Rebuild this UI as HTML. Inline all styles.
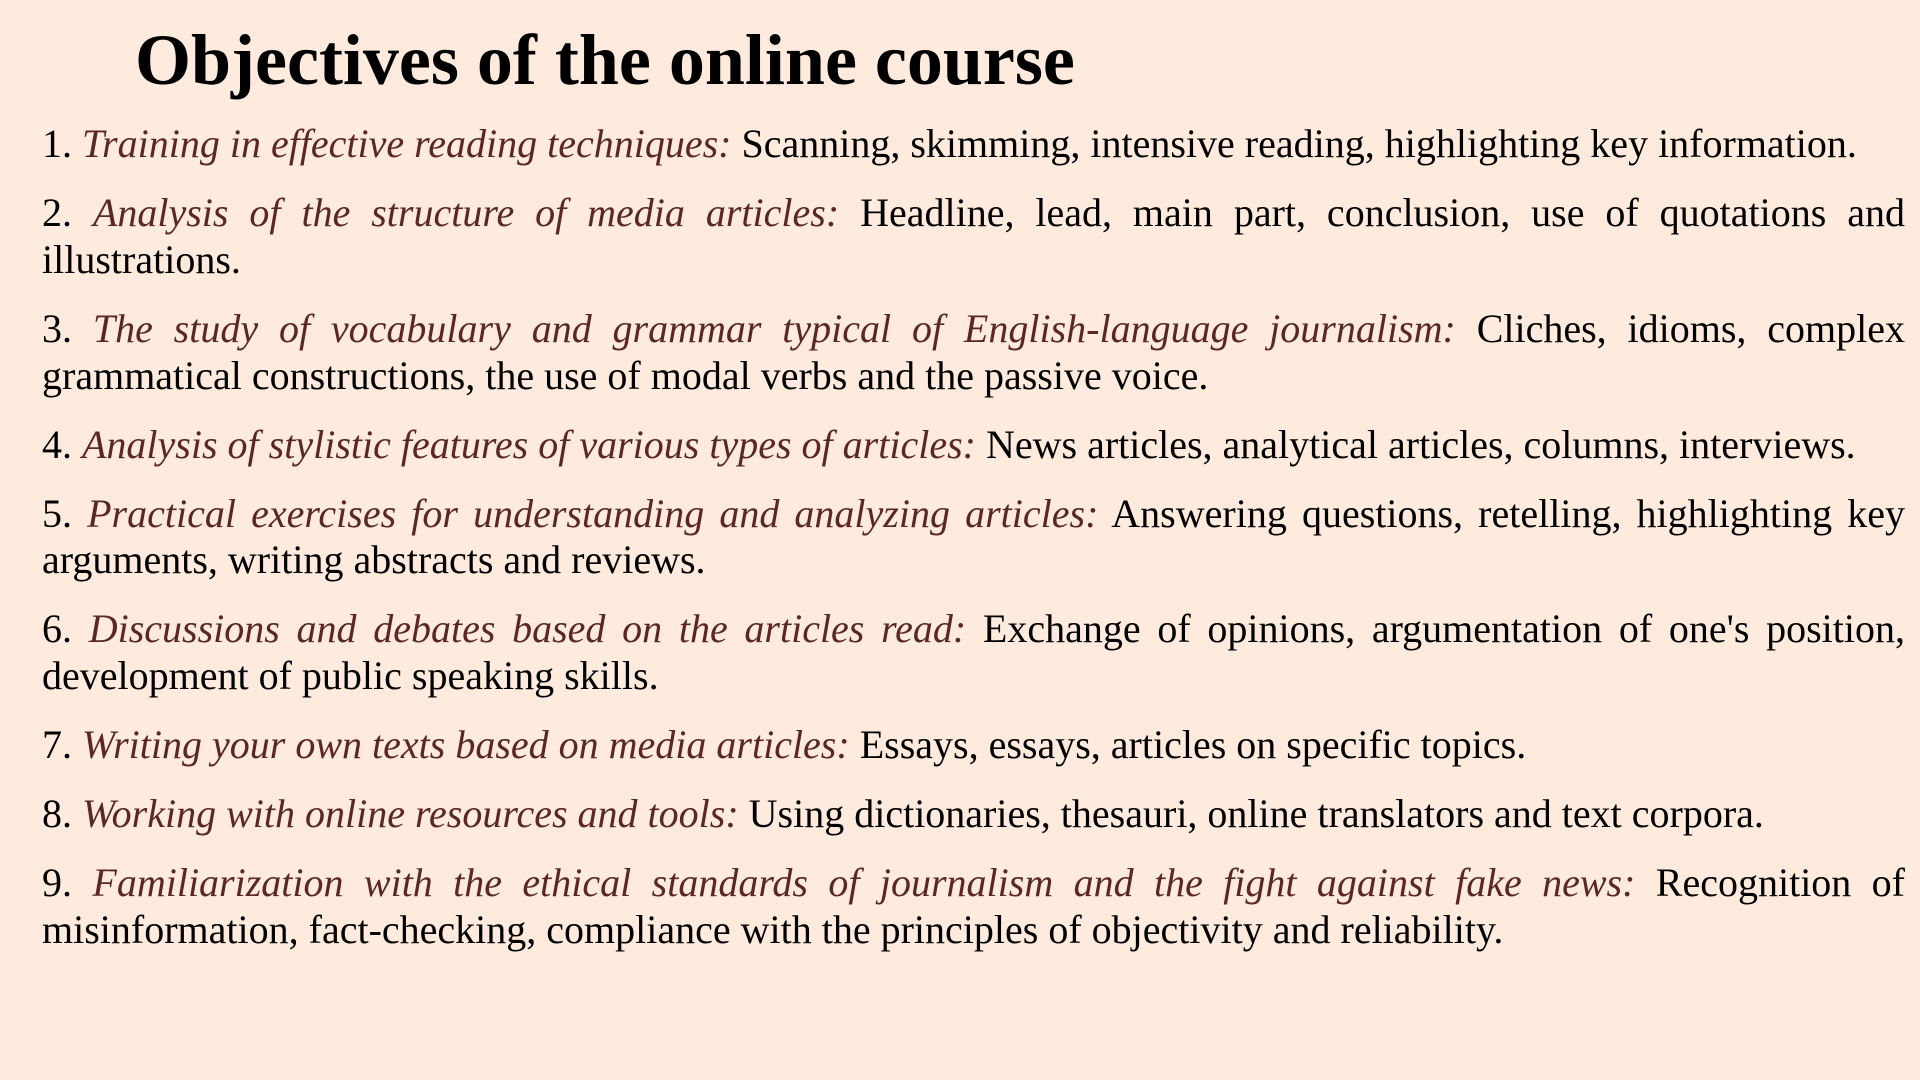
<!DOCTYPE html>
<html><head><meta charset="utf-8"><style>
html,body{margin:0;padding:0}
body{width:1920px;height:1080px;background:#feebdd;font-family:"Liberation Serif",serif;color:#000;overflow:hidden;position:relative}
h1{position:absolute;left:135px;top:19px;margin:0;font-size:72px;font-weight:bold;line-height:82px}
.list{position:absolute;left:42px;width:1863px;top:121px}
p{margin:0 0 22.2px 0;font-size:40px;line-height:46.8px;text-align:justify}
i{color:#5a2626}
</style></head><body>
<h1>Objectives of the online course</h1>
<div class="list">
<p>1. <i>Training in effective reading techniques:</i> Scanning, skimming, intensive reading, highlighting key information.</p>
<p>2. <i>Analysis of the structure of media articles:</i> Headline, lead, main part, conclusion, use of quotations and illustrations.</p>
<p>3. <i>The study of vocabulary and grammar typical of English-language journalism:</i> Cliches, idioms, complex grammatical constructions, the use of modal verbs and the passive voice.</p>
<p>4. <i>Analysis of stylistic features of various types of articles:</i> News articles, analytical articles, columns, interviews.</p>
<p>5. <i>Practical exercises for understanding and analyzing articles:</i> Answering questions, retelling, highlighting key arguments, writing abstracts and reviews.</p>
<p>6. <i>Discussions and debates based on the articles read:</i> Exchange of opinions, argumentation of one's position, development of public speaking skills.</p>
<p>7. <i>Writing your own texts based on media articles:</i> Essays, essays, articles on specific topics.</p>
<p>8. <i>Working with online resources and tools:</i> Using dictionaries, thesauri, online translators and text corpora.</p>
<p>9. <i>Familiarization with the ethical standards of journalism and the fight against fake news:</i> Recognition of misinformation, fact-checking, compliance with the principles of objectivity and reliability.</p>
</div>
</body></html>
